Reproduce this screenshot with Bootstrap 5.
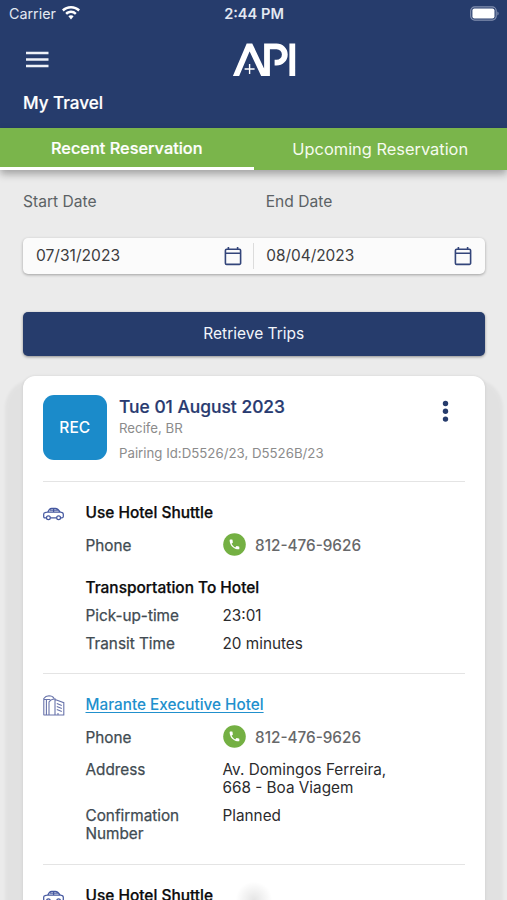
<!DOCTYPE html>
<html lang="en">
<head>
<meta charset="utf-8">
<meta name="viewport" content="width=device-width, initial-scale=1">
<title>My Travel</title>
<link href="https://cdn.jsdelivr.net/npm/bootstrap@5.3.0/dist/css/bootstrap.min.css" rel="stylesheet">
<style>
  :root { --navy: #263c6c; --leaf: #7ab54b; --sky: #1b8bca; }
  html, body { height: 100%; }
  body { font: 400 15.3px/18px Inter, sans-serif; background: #ebebeb; color: #2b2b2d; overflow: hidden; }
  svg { display: block; flex: none; }
  .screen { height: 900px; overflow: hidden; }
  .app-head { background: var(--navy); height: 128px; color: #fff; }
  .status { height: 27px; padding: 0 8px 0 9px; font-size: 14.3px; color: #e3e8f2; }
  .status .clock { font-size: 14.6px; font-weight: 600; }
  .brand-row { height: 65px; padding: 0 26px; }
  .brand { margin-left: 22px; }
  .screen-title { padding-left: 23px; font-size: 17.1px; font-weight: 500; line-height: 21px; -webkit-text-stroke: .2px #fff; }
  .tabs { height: 42px; background: var(--leaf); color: #f6fbef; box-shadow: 0 4px 8px rgba(0,0,0,.32); }
  .tab-item { font-size: 16.4px; border: 0; background: none; color: inherit; text-align: center; padding: 0; }
  .tab-item.current { font-size: 16.35px; font-weight: 500; color: #fff; border-bottom: 3px solid #fff; padding: 1px 0 0; -webkit-text-stroke: .2px #fff; }
  .filters { padding: 23px 22.5px 0 23px; }
  .field-label { color: #5c6265; font-size: 15.6px; }
  .dates { margin-top: 27px; height: 36px; background: #fbfbfb; border-radius: 5px; box-shadow: 0 1px 3px rgba(0,0,0,.32); }
  .date-cell { padding: 0 11.5px 0 13px; color: #3d3d3f; font-size: 15.6px; }
  .date-cell + .date-sep + .date-cell { padding: 0 13px 0 12px; font-size: 15.4px; }
  .date-sep { width: 1px; height: 26px; background: #dcdcdc; }
  .btn-trips { margin-top: 38px; height: 43.5px; padding: 0; background: var(--navy); color: #f2f5fb; font-size: 15.5px; border: 0; border-radius: 5px; box-shadow: 0 1px 3px rgba(0,0,0,.4); }
  .trip { margin: 20.5px 22.5px 0 23px; height: 560px; border: 0; border-radius: 12px; background: #fff; padding: 19px 20px 0 19.5px;
    box-shadow: 0 0 3px rgba(0,0,0,.1), 0 21px 3px 18px rgba(0,0,0,.04); }
  .trip-top { height: 85.5px; }
  .code { width: 64.5px; height: 64.5px; border-radius: 11px; background: var(--sky); color: #fff; font-size: 15.5px; font-weight: 500; margin-right: 12px; padding-top: 2px; }
  .trip-date { color: #283a70; font-size: 17.4px; font-weight: 500; line-height: 24px; -webkit-text-stroke: .2px #283a70; }
  .trip-sub { color: #8b8b8b; font-size: 13.25px; line-height: 20px; }
  .leg { border-top: 1.5px solid #e4e4e4; }
  .leg-icon { width: 43px; }
  .leg-title { font-size: 15.45px; font-weight: 500; color: #0b0b0c; -webkit-text-stroke: .25px #0b0b0c; }
  .leg-link { font-size: 15.3px; font-weight: 500; color: #2190cd; text-decoration: underline; text-underline-offset: 2px; }
  .key { width: 137px; color: #414b52; font-size: 15.3px; -webkit-text-stroke: .25px #414b52; }
  .num { color: #67686a; font-weight: 500; margin-left: 9.5px; }
  .home-glow { position: absolute; left: 234px; top: 880px; width: 40px; height: 40px; background: radial-gradient(circle, rgba(0,0,0,.1), transparent 65%); }
</style>
<script src="https://cdn.jsdelivr.net/npm/bootstrap@5.3.0/dist/js/bootstrap.bundle.min.js"></script>
</head>
<body>
<svg width="0" height="0" class="position-absolute" aria-hidden="true">
  <symbol id="cal" viewBox="0 0 18 20"><path d="M2.600 3.200h12.800a1.200 1.200 0 0 1 1.200 1.200v12.800a1.200 1.200 0 0 1-1.200 1.200H2.600a1.200 1.200 0 0 1-1.200-1.200V4.400a1.200 1.200 0 0 1 1.200-1.200zM1.400 7.300h15.200M4.400 1v2.500M13.600 1v2.500" fill="none" stroke="#33457a" stroke-width="1.600"/></symbol>
  <symbol id="car" viewBox="0 0 21 14"><g fill="none" stroke="#4558a0" stroke-width="1.250" stroke-linejoin="round"><path d="M3.500 10.800H1.800Q.7 10.800.7 9.500V7.300Q.7 6 2 5.700L4.700 5 6.300 2.500Q7.200 1.300 8.700 1.300h3.600q1.500 0 2.700 1.200L17.200 5l2 .6q1.100.4 1.100 1.700v2.300q0 1.200-1.200 1.200h-1.500M7.400 10.800h6.300M4.700 5h12.500M10.600 1.400V5M6.700 3.100h8.600"/><circle cx="5.400" cy="10.800" r="1.900"/><circle cx="15.600" cy="10.800" r="1.900"/></g></symbol>
  <symbol id="call" viewBox="0 0 23 23"><circle cx="11.500" cy="11.500" r="11.300" fill="#74b043"/><path transform="translate(5 5) scale(.54)" fill="#fff" d="M6.620 10.790c1.440 2.830 3.760 5.140 6.590 6.590l2.200-2.200c.27-.27.67-.36 1.020-.24 1.120.37 2.330.57 3.570.57.55 0 1 .45 1 1V20c0 .55-.45 1-1 1-9.390 0-17-7.610-17-17 0-.55.45-1 1-1h3.500c.55 0 1 .45 1 1 0 1.250.2 2.450.57 3.570.11.35.03.74-.25 1.020l-2.200 2.200z"/></symbol>
</svg>

<main class="screen">
  <header class="app-head">
    <div class="status row g-0 align-items-center">
      <div class="col d-flex align-items-center">Carrier
        <svg style="margin:-2px 0 0 6px" width="18" height="14" viewBox="0 0 18 14" fill="#fff"><path d="M9 0C5.500 0 2.300 1.400 0 3.600l1.700 1.800C3.600 3.600 6.200 2.500 9 2.500s5.400 1.100 7.300 2.900L18 3.600C15.700 1.400 12.500 0 9 0z"/><path d="M9 4.600c-2.200 0-4.200.9-5.700 2.300L5 8.700a5.800 5.800 0 0 1 8 0l1.700-1.800A8.200 8.200 0 0 0 9 4.600z"/><path d="M9 9.200c-1 0-1.900.4-2.600 1L9 13.400l2.600-3.200c-.7-.6-1.600-1-2.600-1z"/></svg>
      </div>
      <div class="col-auto clock">2:44 PM</div>
      <div class="col d-flex justify-content-end">
        <svg style="margin-top:-1px" width="29" height="15" viewBox="0 0 29 15"><rect x=".7" y=".9" width="25.500" height="13.200" rx="4" fill="none" stroke="#8390b0" stroke-width="1.200"/><rect x="2.400" y="2.600" width="22.100" height="9.800" rx="2" fill="#fff"/><path d="M27.400 5.500c1.600.6 1.600 3.400 0 4z" fill="#8390b0"/></svg>
      </div>
    </div>
    <div class="brand-row row g-0 align-items-center">
      <div class="col"><svg width="23" height="17" viewBox="0 0 23 17" stroke="#eef1f8" stroke-width="2.400"><path d="M0 2h22.500M0 8.500h22.500M0 15h22.500"/></svg></div>
      <div class="col-auto brand">
        <svg width="63" height="33" viewBox="233 43 63 33" fill="none" stroke="#fff" role="img" aria-label="API"><path d="M234.300 80L248.600 46.300h1.800L263 73h4V46.300h9.600a8.200 8.200 0 0 1 0 16.400h-2M292.300 43.500V76" stroke-width="5.800"/><path d="M249.600 64v10M244.600 69h10" stroke-width="1.400"/></svg>
      </div>
      <div class="col"></div>
    </div>
    <div class="screen-title">My Travel</div>
  </header>

  <nav class="tabs d-flex position-relative">
    <button class="tab-item current w-50">Recent Reservation</button>
    <button class="tab-item w-50">Upcoming Reservation</button>
  </nav>

  <section class="filters">
    <div class="row g-0 field-label">
      <div class="col-6">Start Date</div>
      <div class="col-6" style="padding-left:12px">End Date</div>
    </div>
    <div class="dates d-flex align-items-center">
      <div class="date-cell w-50 d-flex justify-content-between align-items-center">07/31/2023<svg width="18" height="20"><use href="#cal"/></svg></div>
      <div class="date-sep"></div>
      <div class="date-cell w-50 d-flex justify-content-between align-items-center">08/04/2023<svg width="18" height="20"><use href="#cal"/></svg></div>
    </div>
    <button class="btn btn-trips d-block w-100">Retrieve Trips</button>
  </section>

  <article class="trip card">
    <div class="trip-top d-flex align-items-start">
      <div class="code d-flex align-items-center justify-content-center">REC</div>
      <div class="flex-grow-1">
        <div class="trip-date">Tue 01 August 2023</div>
        <div class="trip-sub" style="margin-top:-1px">Recife, BR</div>
        <div class="trip-sub" style="margin-top:5px">Pairing Id:D5526/23, D5526B/23</div>
      </div>
      <svg class="mt-1 me-3" width="7" height="24" viewBox="0 0 7 24" fill="#263c6c"><circle cx="3.500" cy="4.500" r="2.700"/><circle cx="3.500" cy="12.300" r="2.700"/><circle cx="3.500" cy="20.100" r="2.700"/></svg>
    </div>

    <section class="leg d-flex" style="height:192px">
      <div class="leg-icon"><svg style="margin-top:25px" width="21" height="14"><use href="#car"/></svg></div>
      <div class="flex-grow-1">
        <div class="leg-title" style="margin-top:22px">Use Hotel Shuttle</div>
        <div class="d-flex align-items-center" style="margin-top:11px;height:23px"><div class="key pt-1">Phone</div><svg width="23" height="23"><use href="#call"/></svg><span class="num pt-1">812-476-9626</span></div>
        <div class="leg-title" style="margin-top:23px">Transportation To Hotel</div>
        <div class="d-flex" style="margin-top:10px"><div class="key">Pick-up-time</div><div>23:01</div></div>
        <div class="d-flex" style="margin-top:10px"><div class="key">Transit Time</div><div>20 minutes</div></div>
      </div>
    </section>

    <section class="leg d-flex" style="height:191px">
      <div class="leg-icon"><svg style="margin-top:21px" width="22" height="21" viewBox="0 0 22 21" fill="none" stroke="#6873aa" stroke-width="1.100"><path d="M.8 20V3.500Q2.500 1 6 .8q3.500 0 5 2.500M.5 20h20.800M3.400 20V4M.8 4.500h6.500M6 20V7q1.500-2.500 6-3.200V20M12 4.500l8.800 3.200V20M13.800 8.500l5 2M13.800 11.500l5 2M13.800 14.500l5 2M15 20v-2"/></svg></div>
      <div class="flex-grow-1">
        <div style="margin-top:22px"><a class="leg-link" href="#">Marante Executive Hotel</a></div>
        <div class="d-flex align-items-center" style="margin-top:11px;height:23px"><div class="key pt-1">Phone</div><svg width="23" height="23"><use href="#call"/></svg><span class="num pt-1">812-476-9626</span></div>
        <div class="d-flex" style="margin-top:13px"><div class="key">Address</div><div>Av. Domingos Ferreira,<br>668 - Boa Viagem</div></div>
        <div class="d-flex" style="margin-top:10.500px"><div class="key">Confirmation<br>Number</div><div>Planned</div></div>
      </div>
    </section>

    <section class="leg d-flex">
      <div class="leg-icon"><svg style="margin-top:25px" width="21" height="14"><use href="#car"/></svg></div>
      <div class="leg-title" style="margin-top:22px">Use Hotel Shuttle</div>
    </section>
  </article>
  <div class="home-glow"></div>
</main>
</body>
</html>
